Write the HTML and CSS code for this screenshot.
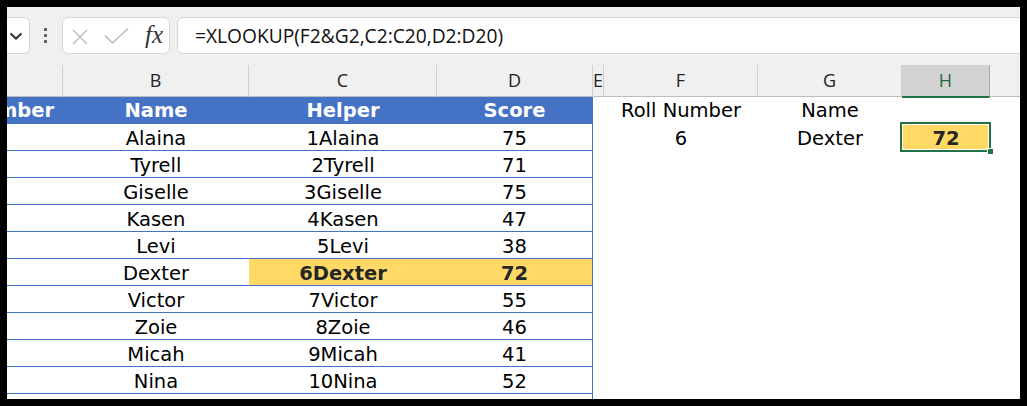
FILE: index.html
```html
<!DOCTYPE html>
<html>
<head>
<meta charset="utf-8">
<link rel="stylesheet" href="styles.css">
</head>
<body>
<div class="app">
  <div class="fbar">
    <div class="namebox">
      <svg class="chev" width="14" height="8" viewBox="0 0 14 8"><path d="M1.5 1.5 L7 6.5 L12.5 1.5" fill="none" stroke="#333" stroke-width="2.2"/></svg>
    </div>
    <div class="dots"><i></i><i></i><i></i></div>
    <div class="fxbox">
      <svg class="ico-x" width="18" height="16" viewBox="0 0 18 16"><path d="M2 1 L16 15 M16 1 L2 15" stroke="#b9b9b9" stroke-width="1.4" fill="none"/></svg>
      <svg class="ico-check" width="25" height="16" viewBox="0 0 25 16"><path d="M1 7.5 L8.5 15 L24 0.5" stroke="#b9b9b9" stroke-width="1.4" fill="none"/></svg>
      <span class="fx">fx</span>
    </div>
    <div class="formula">=XLOOKUP(F2&amp;G2,C2:C20,D2:D20)</div>
  </div>
  <div class="sheet">
    <div class="row colhead">
      <div class="h"></div><div class="h">B</div><div class="h">C</div><div class="h">D</div><div class="h">E</div><div class="h">F</div><div class="h">G</div><div class="h sel">H</div><div class="h last"></div>
    </div>
    <div class="row thead">
      <div class="c t a"><span>Roll Number</span></div><div class="c t">Name</div><div class="c t">Helper</div><div class="c t d">Score</div>
      <div class="c"></div><div class="c">Roll Number</div><div class="c">Name</div><div class="c"></div><div class="c"></div>
    </div>
    <div class="row data">
      <div class="c b"></div><div class="c b">Alaina</div><div class="c b">1Alaina</div><div class="c b d">75</div>
      <div class="c"></div><div class="c">6</div><div class="c">Dexter</div><div class="c res"><span class="selbox"></span><span class="handle"></span>72</div><div class="c"></div>
    </div>
    <div class="row data">
      <div class="c b"></div><div class="c b">Tyrell</div><div class="c b">2Tyrell</div><div class="c b d">71</div>
      <div class="c"></div><div class="c"></div><div class="c"></div><div class="c"></div><div class="c"></div>
    </div>
    <div class="row data">
      <div class="c b"></div><div class="c b">Giselle</div><div class="c b">3Giselle</div><div class="c b d">75</div>
      <div class="c"></div><div class="c"></div><div class="c"></div><div class="c"></div><div class="c"></div>
    </div>
    <div class="row data">
      <div class="c b"></div><div class="c b">Kasen</div><div class="c b">4Kasen</div><div class="c b d">47</div>
      <div class="c"></div><div class="c"></div><div class="c"></div><div class="c"></div><div class="c"></div>
    </div>
    <div class="row data">
      <div class="c b"></div><div class="c b">Levi</div><div class="c b">5Levi</div><div class="c b d">38</div>
      <div class="c"></div><div class="c"></div><div class="c"></div><div class="c"></div><div class="c"></div>
    </div>
    <div class="row data">
      <div class="c b"></div><div class="c b">Dexter</div><div class="c b hl">6Dexter</div><div class="c b d hl">72</div>
      <div class="c"></div><div class="c"></div><div class="c"></div><div class="c"></div><div class="c"></div>
    </div>
    <div class="row data">
      <div class="c b"></div><div class="c b">Victor</div><div class="c b">7Victor</div><div class="c b d">55</div>
      <div class="c"></div><div class="c"></div><div class="c"></div><div class="c"></div><div class="c"></div>
    </div>
    <div class="row data">
      <div class="c b"></div><div class="c b">Zoie</div><div class="c b">8Zoie</div><div class="c b d">46</div>
      <div class="c"></div><div class="c"></div><div class="c"></div><div class="c"></div><div class="c"></div>
    </div>
    <div class="row data">
      <div class="c b"></div><div class="c b">Micah</div><div class="c b">9Micah</div><div class="c b d">41</div>
      <div class="c"></div><div class="c"></div><div class="c"></div><div class="c"></div><div class="c"></div>
    </div>
    <div class="row data">
      <div class="c b"></div><div class="c b">Nina</div><div class="c b">10Nina</div><div class="c b d">52</div>
      <div class="c"></div><div class="c"></div><div class="c"></div><div class="c"></div><div class="c"></div>
    </div>
    <div class="row tail">
      <div class="c"></div><div class="c"></div><div class="c"></div><div class="c d"></div>
    </div>
  </div>
</div>
</body>
</html>
```

FILE: styles.css
```css
* { box-sizing: border-box; }
html, body { margin: 0; padding: 0; }
body {
  background: #000;
  padding: 7px;
  width: 1027px;
  height: 406px;
}
.app {
  width: 1013px;
  height: 392px;
  overflow: hidden;
  background: #fff;
  display: flex;
  flex-direction: column;
}
.fbar {
  height: 57px;
  flex: none;
  background: #f0f0f0;
  display: flex;
  align-items: flex-start;
  padding-top: 10px;
}
.namebox {
  width: 23px;
  height: 37px;
  background: #fff;
  border: 1px solid #d6d6d6;
  border-left: none;
  border-radius: 0 6px 6px 0;
  display: flex;
  align-items: center;
  padding-left: 2px;
}
.chev { display: block; }
.dots {
  margin-left: 14px;
  height: 37px;
  display: flex;
  flex-direction: column;
  justify-content: center;
  gap: 3px;
}
.dots i {
  display: block;
  width: 3px;
  height: 3px;
  background: #666;
}
.fxbox {
  margin-left: 15px;
  width: 108px;
  height: 37px;
  background: #fff;
  border: 1px solid #d6d6d6;
  border-radius: 6px;
  display: flex;
  align-items: center;
  padding-left: 8px;
}
.ico-x { display: block; margin-top: 2px; }
.ico-check { display: block; margin-left: 15px; margin-top: 0px; }
.fx {
  margin-left: 16px;
  font-family: "Liberation Serif", "DejaVu Serif", serif;
  font-style: italic;
  font-size: 25px;
  line-height: 1;
  color: #333;
  margin-top: -3px;
}
.formula {
  flex: 1;
  margin-left: 7px;
  margin-right: -10px;
  height: 37px;
  background: #fff;
  border: 1px solid #d6d6d6;
  border-radius: 6px;
  padding-left: 17px;
  font-family: "Open Sans", "Noto Sans", sans-serif;
  font-size: 19.2px;
  line-height: 35px;
  color: #111;
  white-space: nowrap;
}
.sheet {
  flex: 1;
  display: flex;
  flex-direction: column;
}
.row {
  display: grid;
  grid-template-columns: 56px 186px 188px 156px 11px 154px 144px 88px 1fr;
}
.colhead {
  height: 33px;
  background: #f0f0f0;
  border-bottom: 1px solid #bcbcbc;
  padding-top: 1px;
}
.h {
  border-right: 1px solid #d0d0d0;
  font-family: "Open Sans", "Noto Sans", sans-serif;
  font-size: 18px;
  line-height: 31px;
  text-align: center;
  color: #222;
}
.h.sel {
  background: #d2d2d2;
  color: #1d6b40;
  border-right-color: #a8a8a8;
  border-bottom: 2px solid #217346;
  margin-bottom: -1px;
}
.h.last { border-right: none; }
.c {
  font-family: "DejaVu Sans", Verdana, sans-serif;
  font-size: 19.5px;
  color: #000;
  text-align: center;
  white-space: nowrap;
  height: 27px;
  line-height: 26px;
}
.data .c { padding-top: 2px; }
.thead .c { height: 27px; line-height: 27px; }
.c.t {
  background: #4472c4;
  color: #fff;
  font-weight: bold;
}
.c.a {
  display: flex;
  justify-content: flex-end;
  padding-right: 9px;
}
.c.b { border-bottom: 1px solid #4472c4; }
.c.d { border-right: 1px solid #4472c4; }
.c.hl {
  background: #ffd966;
  font-weight: bold;
  color: #262626;
}
.c.res {
  position: relative;
  background: #ffd966;
  font-weight: bold;
  color: #262626;
  line-height: 26px;
}
.selbox {
  position: absolute;
  left: -2px;
  top: -2px;
  right: -1px;
  bottom: -1px;
  border: 2px solid #217346;
  box-shadow: inset 0 0 0 1px #fff;
}
.handle {
  position: absolute;
  right: -4px;
  bottom: -4px;
  width: 7px;
  height: 7px;
  background: #217346;
  border: 1px solid #fff;
}
.tail { flex: 1; }
.tail .c { height: auto; }
```
